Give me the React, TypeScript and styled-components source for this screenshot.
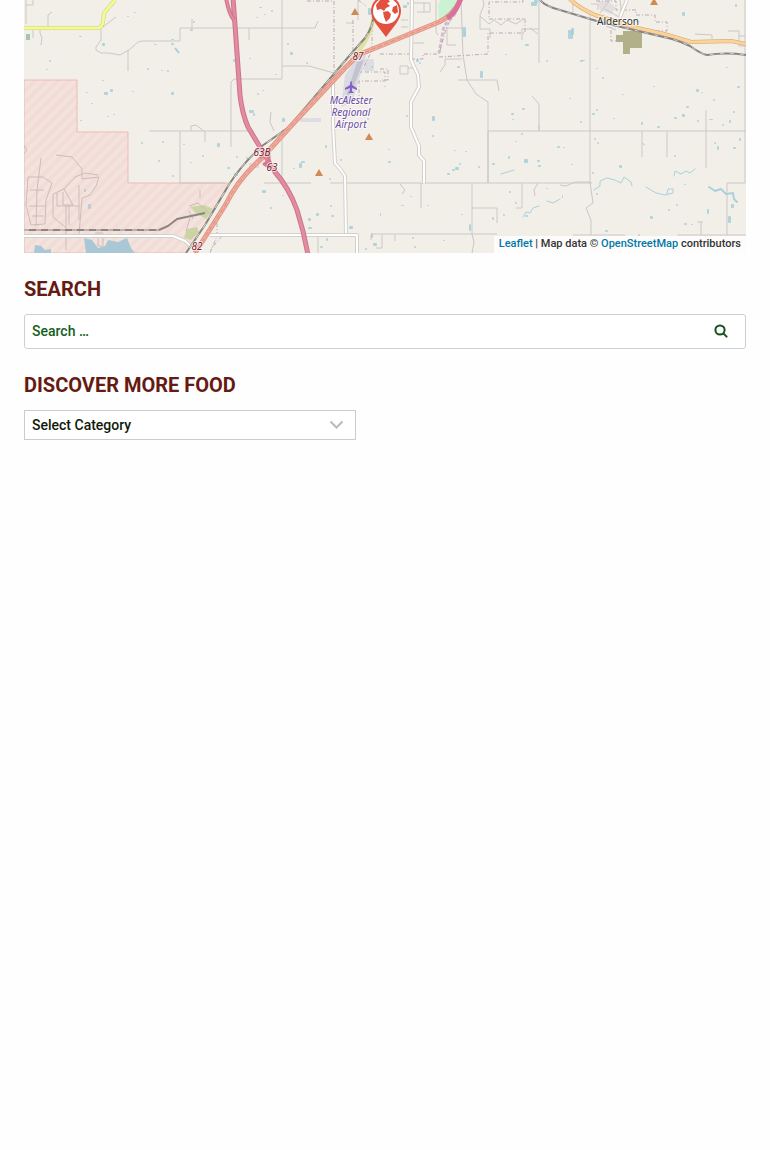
import React from "react";
import styled, { createGlobalStyle } from "styled-components";

const GlobalStyle = createGlobalStyle`
  *, *::before, *::after { box-sizing: border-box; }
  body {
    margin: 0;
    background: #fefefe;
    color: #333;
    font-family: Roboto, "Liberation Sans", sans-serif;
    font-size: 14px;
    font-weight: 500;
  }
`;

const Page = styled.main`
  display: flex;
  flex-direction: column;
  gap: 24px;
  padding: 0 24px 24px;
`;

const MapFrame = styled.section`
  display: grid;
  overflow: hidden;
  background: #f2efe9;
`;

const MapDrawing = styled.svg`
  grid-area: 1 / 1;
  display: block;
  width: 100%;
  height: 253px;
`;

const Attribution = styled.div`
  grid-area: 1 / 1;
  align-self: end;
  justify-self: end;
  z-index: 1;
  padding: 0 5px 2px;
  background: rgba(255, 255, 255, 0.8);
  font-size: 11px;
  line-height: 15px;
`;

const MapLink = styled.a`
  color: #0078a8;
  text-decoration: none;
`;

const Widget = styled.section`
  display: flex;
  flex-direction: column;
  gap: 13px;
`;

const WidgetTitle = styled.h2`
  margin: 0;
  color: #651a12;
  font-size: 20px;
  font-weight: 700;
  line-height: 24px;
`;

const SearchForm = styled.form`
  display: flex;
  height: 35px;
  border: 1px solid #ccd0d4;
  border-radius: 3px;
  background: #fff;
`;

const SearchInput = styled.input`
  flex: 1;
  min-width: 0;
  padding: 0 7px 2px;
  border: 0;
  background: transparent;
  color: #14601a;
  font: inherit;
  &::placeholder { color: #14601a; opacity: 1; }
`;

const SearchButton = styled.button`
  display: grid;
  place-items: center;
  width: 48px;
  padding: 0 0 2px;
  border: 0;
  background: transparent;
  color: #14521c;
  cursor: pointer;
`;

const SelectBox = styled.div`
  display: grid;
  align-items: center;
  width: 332px;
  max-width: 100%;
`;

const Select = styled.select`
  grid-area: 1 / 1;
  appearance: none;
  width: 100%;
  height: 30px;
  padding: 0 32px 0 7px;
  border: 1px solid #ccc;
  border-radius: 0;
  background: #fff;
  color: #101a08;
  font: inherit;
`;

const Chevron = styled.svg`
  grid-area: 1 / 1;
  justify-self: end;
  margin-right: 12px;
  pointer-events: none;
`;

const PlaceLabel = styled.text<{ $color: string; $upright?: boolean }>`
  fill: ${(p) => p.$color};
  stroke: #fff;
  stroke-opacity: 0.65;
  stroke-width: 2px;
  paint-order: stroke;
  font-family: "Noto Sans", sans-serif;
  font-size: 10px;
  font-weight: 400;
  font-style: ${(p) => (p.$upright ? "normal" : "italic")};
  text-anchor: middle;
`;

/* Ponds as [x, y, width, height]. */
const ponds: number[][] = [
  [102, 43, 3, 3], [79, 36, 3, 1], [49, 60, 2, 2], [46, 69, 2, 1],
  [127, 16, 2, 1], [134, 12, 2, 1], [190, 29, 3, 2], [193, 21, 2, 2], [154, 44, 3, 1], [171, 39, 3, 1],
  [171, 43, 3, 2], [147, 68, 2, 2], [161, 70, 2, 1], [167, 70, 2, 2], [102, 80, 2, 1], [110, 89, 3, 3],
  [104, 92, 4, 3], [86, 92, 2, 1], [91, 103, 2, 1], [107, 116, 2, 1], [113, 114, 2, 1], [80, 120, 2, 1],
  [171, 92, 3, 3], [132, 91, 2, 1], [141, 142, 2, 2], [162, 141, 2, 2], [158, 160, 2, 2], [172, 175, 2, 2],
  [183, 144, 2, 1], [202, 155, 2, 2], [190, 162, 2, 1], [88, 204, 3, 5], [84, 189, 2, 3],
  [259, 7, 3, 1], [264, 14, 2, 1], [271, 10, 2, 2], [256, 17, 2, 1], [287, 43, 2, 2], [290, 52, 3, 3],
  [249, 58, 2, 1], [233, 59, 2, 3], [275, 74, 2, 1], [306, 62, 2, 2], [262, 90, 2, 1], [249, 110, 5, 3],
  [253, 113, 2, 3], [243, 121, 3, 2], [282, 118, 3, 4], [257, 93, 2, 2], [246, 157, 2, 2], [262, 190, 4, 3],
  [217, 143, 3, 4], [236, 156, 2, 2], [227, 167, 3, 2], [234, 173, 4, 3], [299, 163, 3, 5], [301, 161, 4, 2],
  [325, 145, 2, 3], [329, 178, 2, 2], [282, 195, 2, 1], [293, 168, 2, 1], [270, 207, 2, 2], [330, 205, 2, 2],
  [308, 218, 3, 3], [316, 213, 3, 3], [331, 215, 3, 2], [326, 238, 2, 3], [320, 246, 3, 2], [308, 227, 4, 2],
  [349, 226, 4, 3], [365, 248, 2, 2], [340, 159, 2, 2], [367, 118, 2, 2], [368, 8, 3, 7], [371, 66, 2, 2],
  [403, 5, 4, 3], [407, 2, 2, 3], [416, 59, 3, 3], [419, 62, 2, 2], [457, 66, 3, 2], [480, 71, 3, 7],
  [462, 27, 4, 10], [464, 32, 2, 4], [531, 2, 6, 4], [534, 0, 4, 3], [525, 44, 4, 2], [505, 54, 2, 1],
  [546, 60, 2, 2], [522, 108, 3, 2], [511, 113, 3, 2], [512, 119, 2, 1], [432, 116, 3, 5], [406, 115, 2, 2],
  [384, 86, 2, 1], [432, 135, 2, 2], [388, 161, 3, 2], [388, 149, 2, 1], [454, 150, 2, 1], [465, 151, 2, 1],
  [459, 163, 2, 2], [447, 173, 3, 2], [452, 169, 3, 2], [455, 167, 4, 3], [492, 163, 3, 2], [508, 156, 2, 3],
  [524, 159, 4, 4], [537, 160, 3, 2], [538, 165, 3, 2], [515, 141, 2, 1], [521, 133, 2, 2], [557, 146, 3, 2],
  [478, 166, 2, 2], [410, 196, 2, 1], [380, 213, 1, 3], [401, 205, 3, 1], [427, 205, 2, 1], [461, 214, 2, 1],
  [469, 224, 2, 7], [492, 217, 2, 3], [503, 214, 2, 2], [515, 202, 2, 2], [509, 191, 2, 2], [525, 215, 3, 2],
  [443, 240, 2, 1], [412, 237, 2, 2], [371, 233, 2, 5], [373, 243, 4, 3], [414, 246, 2, 2], [546, 188, 2, 1],
  [568, 30, 5, 9], [571, 28, 3, 7], [580, 60, 3, 2], [569, 98, 2, 1], [581, 60, 4, 1], [592, 113, 3, 2],
  [602, 77, 2, 2], [596, 109, 2, 2], [596, 68, 2, 1], [622, 94, 2, 1], [653, 86, 2, 1], [682, 12, 3, 4],
  [696, 89, 3, 3], [701, 92, 2, 1], [726, 67, 2, 1], [737, 86, 3, 2], [735, 4, 2, 3], [686, 106, 3, 2],
  [682, 114, 3, 3], [674, 117, 3, 2], [641, 122, 2, 3], [657, 126, 3, 2], [613, 118, 2, 1], [594, 138, 2, 2],
  [597, 142, 2, 2], [592, 172, 2, 2], [619, 165, 3, 3], [563, 147, 2, 1], [571, 164, 2, 1], [562, 195, 1, 3],
  [717, 146, 2, 4], [714, 142, 2, 2], [739, 138, 2, 3], [733, 147, 3, 2], [729, 120, 2, 3], [722, 124, 2, 2],
  [674, 155, 2, 2], [684, 184, 2, 1], [676, 204, 2, 2], [668, 209, 2, 2], [650, 216, 3, 3], [707, 209, 2, 5],
  [728, 216, 3, 7], [731, 204, 3, 4], [605, 230, 3, 2], [638, 234, 2, 2], [684, 223, 3, 2], [691, 224, 2, 1],
  [596, 193, 2, 2], [713, 99, 2, 2], [733, 111, 2, 2], [709, 119, 4, 1], [697, 120, 2, 2], [580, 121, 2, 2],
];

/* Thin local roads and parcel boundaries. */
const minorRoads = [
  "M26 0V24M26 5H33V0M48 27V15L52 12M40 29V33L42 38L41 45M33 28V38",
  "M101 29V40L96 47V50L101 53L109 53L120 55L129 50L138 42L142 41H180V28H315L318 21",
  "M103 27L116 17M128 50V71M192 28V19M249 28V40M282 0V79M282 66H309L334 73M282 79H234L231 82V147",
  "M149 131H250M180 131V183M191 131V126L196 125L205 132V142M180 183H225M271 112L270 122L274 131",
  "M282 131V183M264 183H311M330 183H592M358 0V20M346 23H353M318 235V253M282 131L290 126",
  "M414 3H430V12H417M424 2V12M401 20H408M401 27H408M436 0V32L438 35M447 28V45H456M446 28H462M412 43H424",
  "M461 0L462 28L463 55L467 80L476 94L488 102V183M458 80H497L499 91M445 59H462M445 59V65L440 72",
  "M483 0L484 5L480 15V29H490V38M480 16L489 24L494 20L501 25L507 20L516 24L525 18M522 29H539M530 28L538 34M522 29V40M539 0V63",
  "M532 96L539 104V131M488 131H746M488 131V183M539 125V131M590 10V183M400 66H408V74H400V66M408 68H415",
  "M421 183V208M472 183V234L474 242L472 253M472 208H497V223M522 183V208H516M538 183L534 190L535 196",
  "M371 234H497M371 235V240M382 235V248H376M395 235V241M400 184L405 190L402 194",
  "M560 185L566 186L575 182H590L593 203L586 208L591 220V235M573 235H625M677 235H746M727 235V183H745V0M701 222V235M697 222H703",
  "M642 131V157M642 143L645 145M667 131V157M706 110V168M695 34L712 35V39M728 31H739V46H745M739 36H745",
  "M573 0V12M620 0L622 16M605 9L619 17M610 0L600 13M606 26L616 30M628 19L640 22M591 4H598V10",
];

const whiteRoads = [
  "M333 80V125L335 163L341 170L345 176L346 235",
  "M412 0L411 60L418 75L419 87L411 102V127L419 146V155L424 161V183",
  "M24 236H173L185 241L192 247",
  "M210 235H357V253",
  "M627 0L620 17",
];

const boundaries = [
  "M307 1H334V88M334 88V125M353 20V55M358 0L366 6M353 58L348 65M365 72H385V81H359V98",
  "M372 10V50L361 73M380 54H411V59H423V54H439L446 29L460 0M439 57L488 54V33H525V19H489V2H523V0",
  "M380 69H388V80H380M596 1H616V10H636V15H655V22H667V31H640M603 20H611V41H621",
  "M217 223V236L210 253M222 236L210 250",
];

const peaks = [[355, 12], [369, 137], [319, 173], [654, 2]];

const railway = "M374 10Q374 26 365 38L350 55L289 127L262 146Q243 163 230 183L205 225L186 253";
const easternRail = "M540 0Q545 6 560 10L600 22L672 39Q682 42 690 46Q701 54 707 55Q726 52 746 55";
const highway = "M462 -5Q456 14 439 22L390 42L358 55L345 68L290 127L262 158Q238 179 226 204L195 253";
const pinkHighway = "M233 -2L235 25L240 95Q242 113 248 127L275 172Q289 188 297 210Q304 232 308 255";
const orangeRoad = "M569 -2Q577 7 595 15L637 28L664 34L691 42L731 41L746 44";

function MapArtwork() {
  return (
    <MapDrawing viewBox="24 0 722 253" preserveAspectRatio="xMidYMid slice" role="img" aria-label="Map of the McAlester area">
      <defs>
        <pattern id="restricted" width="8" height="8" patternUnits="userSpaceOnUse" patternTransform="rotate(45)">
          <rect width="8" height="8" fill="#f3e3dd" />
          <rect width="4" height="8" fill="#f3dcd7" />
        </pattern>
      </defs>
      <rect x="24" width="722" height="253" fill="#f2efe9" />
      <path d="M24 80H77V132H128V183H229L205 225L186 253H24Z" fill="url(#restricted)" stroke="#edb9b5" strokeWidth="1" />

      <path d="M438 5L441 0H457L452 10L439 20Z" fill="#c9f3d2" />
      <path d="M616 35H623V31H642V48H630V54H623V42H616Z" fill="#b1b088" />
      <path d="M187 229L197 227L199 232L191 240L184 238ZM190 207L204 205L213 209L206 219L196 213Z" fill="#cbd5a4" />
      <path d="M345 75L360 53L366 56L352 103L341 107Z" fill="#dadae2" />
      <path d="M357 62L364 60L353 88L344 103Z" fill="#c3c3d0" />
      <path d="M364 59H374V71H364ZM300 118H321V122H300ZM249 163H259V168H249Z" fill="#dedde3" />
      <path d="M598 1H608L616 8L611 14L600 10Z" fill="#e3dedf" />

      <g fill="#a5ced9">
        {ponds.map(([x, y, w, h], i) => <rect key={i} x={x} y={y} width={w} height={h} rx="1" opacity="0.85" />)}
      </g>
      <path d="M84 238L92 240L98 248L105 246L108 240L118 242L127 238L131 248L135 253H86ZM35 245L41 246L45 250L51 249V253H34Z" fill="#a9c7d5" />
      <path d="M26 34H30V40H26Z" fill="#a6c3b8" />
      <path d="M175 48L179 53" stroke="#a5ced9" strokeWidth="2" />

      <g fill="none" stroke="#a9d1dc" strokeLinecap="round" strokeLinejoin="round">
        <path d="M594 190L600 186V181L607 178L615 180L621 183L624 177L631 182L632 186M646 187L656 193L665 195L673 193V189L668 189L667 194M674 176L675 171L681 174L686 171L690 173L695 169" strokeWidth="1" />
        <path d="M709 187L715 191L721 189L726 194L733 193L734 199L737 202" strokeWidth="2" />
        <path d="M523 217L526 212L530 213L533 208L539 206M547 201L553 203L560 199M501 174L514 170" strokeWidth="1" />
      </g>

      <g fill="none" stroke="#cbc8c4" strokeWidth="1">
        {minorRoads.map((d) => <path key={d} d={d} />)}
      </g>
      <g fill="none" stroke="#cbbdbb" strokeWidth="1">
        <path d="M41 158L37 190L36 226M28 177L43 177L52 183L46 200L45 224L31 225L26 205L28 177M30 190H44M29 206H45M32 216H44M56 155L72 157L82 169V179L99 177L96 186L90 195L82 198L79 235M75 177L85 173L98 175M75 177L64 189L53 194V217L65 227M64 189L73 205H63V192M57 193V206H79M66 206V250M69 206V225M79 185V220" />
        <path d="M24 145L27 150L24 154M95 233H103V246H98V238M200 190V198M189 206L198 203L212 216M193 219L189 211M190 218L186 231" />
      </g>
      <g fill="none" stroke="#b9a3b6" strokeWidth="1" strokeDasharray="4 2 1 2" opacity="0.9">
        {boundaries.map((d) => <path key={d} d={d} />)}
      </g>
      <path d="M460 2L455 14L444 26L439 53" fill="none" stroke="#b489b4" strokeWidth="3" strokeDasharray="4 2" opacity="0.5" />

      {whiteRoads.map((d) => (
        <g key={d} fill="none" strokeLinejoin="round">
          <path d={d} stroke="#d3d0cc" strokeWidth="4" />
          <path d={d} stroke="#fff" strokeWidth="2" />
        </g>
      ))}

      <g fill="none" strokeLinejoin="round">
        <path d="M24 28H97Q102 28 103 22L104 13L115 0" stroke="#c9d083" strokeWidth="4" />
        <path d="M24 28H97Q102 28 103 22L104 13L115 0" stroke="#f4fa91" strokeWidth="3" />
        <path d="M374 14Q372 38 351 60" stroke="#dfe2a0" strokeWidth="4" />
        <path d={orangeRoad} stroke="#d3a468" strokeWidth="4" />
        <path d={orangeRoad} stroke="#fad29a" strokeWidth="3" />
        <path d={railway} stroke="#85857e" strokeWidth="2" />
        <path d={railway} stroke="#d9dad3" strokeWidth="1" strokeDasharray="6 6" />
        <path d="M24 230H159L168 226L177 219L205 213" stroke="#8b8583" strokeWidth="2" />
        <path d="M24 230H159" stroke="#eadfdd" strokeWidth="1" strokeDasharray="5 7" />
        <path d={easternRail} stroke="#858585" strokeWidth="2" />
        <path d={easternRail} stroke="#ccc" strokeWidth="1" strokeDasharray="4 6" />
        <path d={highway} stroke="#e09586" strokeWidth="5" />
        <path d={highway} stroke="#f3ac9b" strokeWidth="3" />
        <path d={highway} stroke="#d98f81" strokeWidth="1" strokeDasharray="5 2" />
        <path d="M462 -5Q456 14 447 18" stroke="#d7739b" strokeWidth="5" />
        <path d={pinkHighway} stroke="#cf7389" strokeWidth="5" />
        <path d={pinkHighway} stroke="#e18ca0" strokeWidth="3" />
        <path d="M226 -2Q229 14 234 20" stroke="#cf7188" strokeWidth="4" />
        <path d="M226 -2Q229 14 234 20" stroke="#e18ca0" strokeWidth="2" />
        <path d="M260 158L269 149V161L264 164L272 169" stroke="#d7798e" strokeWidth="3" />
      </g>

      <g fill="#d08a55">
        {peaks.map(([x, y]) => <path key={x} d={`M${x} ${y - 4}L${x + 4} ${y + 3}H${x - 4}Z`} />)}
      </g>
      <path d="M351 81Q352 81 352 85L357 88V90L352 88V91L354 93H348L350 91V88L345 90V88L350 85Q350 81 351 81Z" fill="#8461c4" />

      <PlaceLabel $color="#6a4ba5" x="351" y="104">McAlester</PlaceLabel>
      <PlaceLabel $color="#6a4ba5" x="351" y="116">Regional</PlaceLabel>
      <PlaceLabel $color="#6a4ba5" x="351" y="128">Airport</PlaceLabel>
      <PlaceLabel $color="#333" $upright x="618" y="25">Alderson</PlaceLabel>
      <PlaceLabel $color="#7b2630" x="358" y="60">87</PlaceLabel>
      <PlaceLabel $color="#7b2630" x="262" y="156">63B</PlaceLabel>
      <PlaceLabel $color="#7b2630" x="272" y="171">63</PlaceLabel>
      <PlaceLabel $color="#7b2630" x="197" y="250">82</PlaceLabel>

      <path d="M386 -4C377 -4 371 3 371 11C371 20 379 27 386 37C393 27 401 20 401 11C401 3 395 -4 386 -4Z" fill="#e4503f" />
      <circle cx="386" cy="11" r="13" fill="#fff" />
      <path d="M376 5L380 0L388 -1L390 2L387 3L390 6L386 8L384 11L381 9L377 10ZM383 12L388 11L391 14L390 18L386 22L384 17ZM393 7L397 5L398 12L395 14L392 11Z" fill="#e4503f" />
    </MapDrawing>
  );
}

export default function App() {
  return (
    <>
      <GlobalStyle />
      <Page>
        <MapFrame aria-label="Map">
          <MapArtwork />
          <Attribution>
            <MapLink href="#leaflet">Leaflet</MapLink> | Map data © <MapLink href="#openstreetmap">OpenStreetMap</MapLink> contributors
          </Attribution>
        </MapFrame>

        <Widget>
          <WidgetTitle id="search-title">SEARCH</WidgetTitle>
          <SearchForm role="search" onSubmit={(e) => e.preventDefault()}>
            <SearchInput type="search" placeholder="Search …" aria-labelledby="search-title" />
            <SearchButton type="submit" aria-label="Search">
              <svg width="14" height="14" viewBox="0 0 14 14" fill="none" stroke="currentColor" strokeWidth="2" strokeLinecap="round">
                <circle cx="6" cy="6" r="4.6" />
                <path d="M9.6 9.6L12.6 12.6" />
              </svg>
            </SearchButton>
          </SearchForm>
        </Widget>

        <Widget>
          <WidgetTitle id="category-title">DISCOVER MORE FOOD</WidgetTitle>
          <SelectBox>
            <Select aria-labelledby="category-title" defaultValue="">
              <option value="">Select Category</option>
            </Select>
            <Chevron width="15" height="10" viewBox="0 0 15 10" fill="none" stroke="#bbb" strokeWidth="2" aria-hidden="true">
              <path d="M1.5 1.5L7.5 7.5L13.5 1.5" />
            </Chevron>
          </SelectBox>
        </Widget>
      </Page>
    </>
  );
}
